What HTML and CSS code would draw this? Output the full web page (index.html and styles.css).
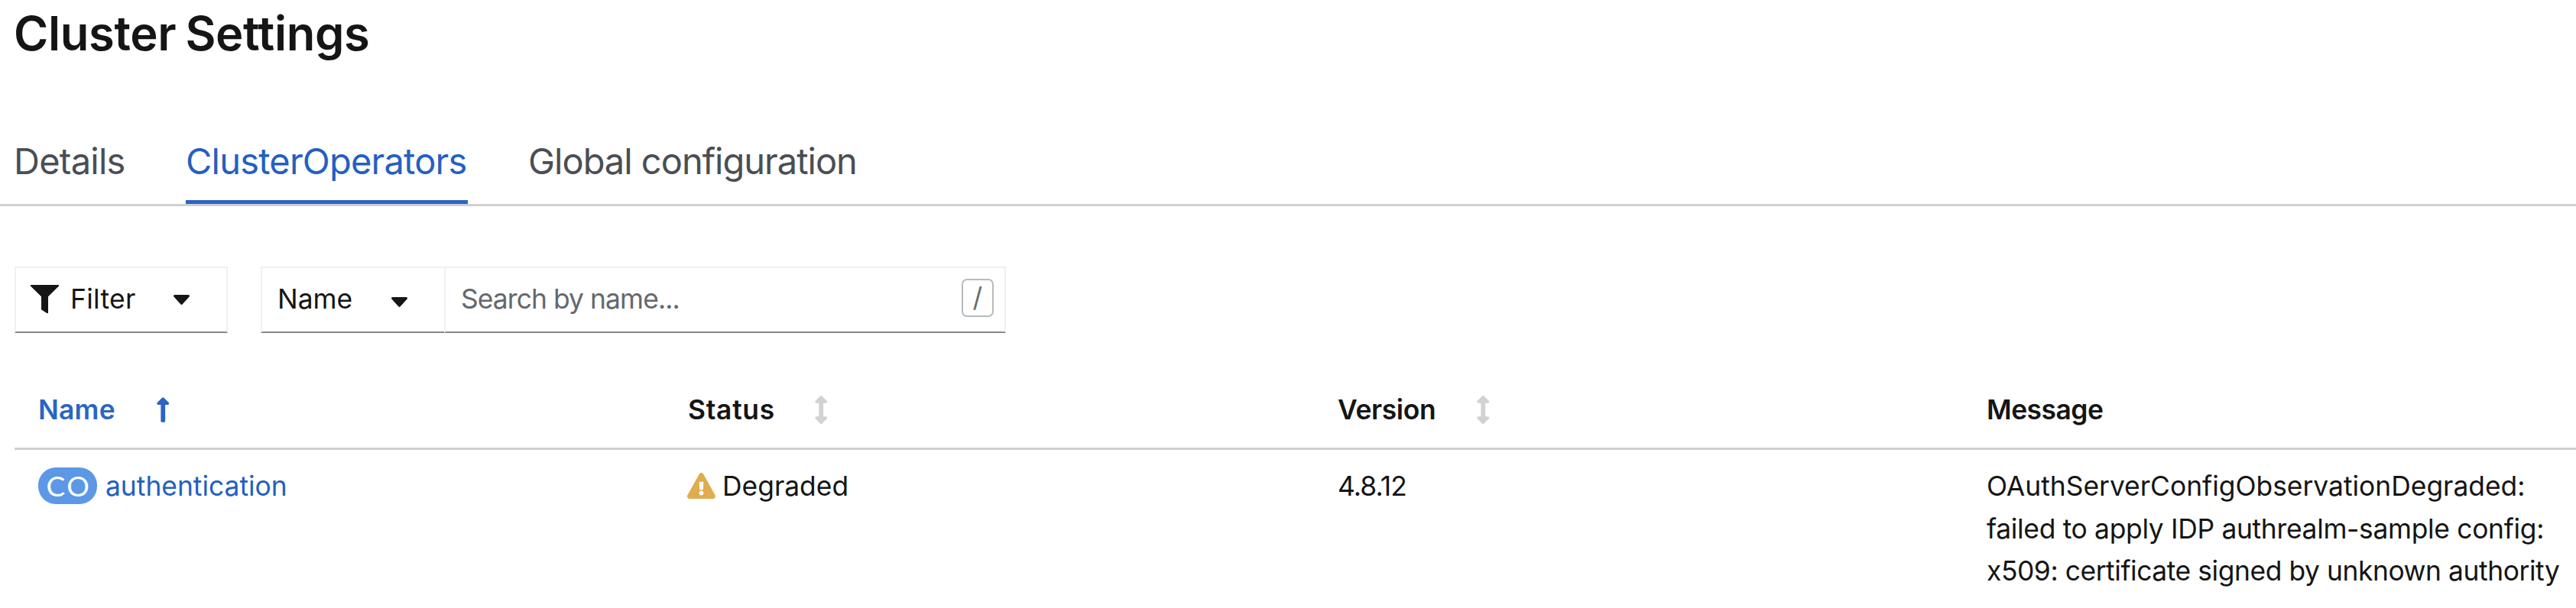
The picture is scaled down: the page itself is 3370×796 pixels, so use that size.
FILE: index.html
```html
<!DOCTYPE html>
<html lang="en">
<head>
<meta charset="utf-8">
<title>Cluster Settings</title>
<link rel="stylesheet" href="styles.css">
</head>
<body>
<h1 class="title">Cluster Settings</h1>
<nav class="tabs">
  <a class="tab tab-details">Details</a>
  <a class="tab tab-operators active">ClusterOperators</a>
  <a class="tab tab-global">Global configuration</a>
</nav>
<div class="toolbar">
  <button class="control filter">
    <svg class="funnel" viewBox="0 0 37 37"><path d="M0 0H37V1.5L23 15.3V37H21.3L14 32.2V15.3L0 1.5Z"/></svg>
    <span class="filter-label">Filter</span>
    <svg class="caret" viewBox="11 192 298 169" preserveAspectRatio="none"><path d="M31.3 192h257.3c17.8 0 26.7 21.500 14.100 34.100L174.100 354.700c-7.800 7.800-20.500 7.800-28.300 0L17.200 226.100C4.600 213.500 13.500 192 31.300 192z"/></svg>
  </button>
  <div class="search-group">
    <button class="control attribute">
      <span>Name</span>
      <svg class="caret caret-low" viewBox="11 192 298 169" preserveAspectRatio="none"><path d="M31.3 192h257.3c17.8 0 26.7 21.500 14.100 34.100L174.100 354.700c-7.800 7.800-20.500 7.800-28.300 0L17.200 226.100C4.600 213.500 13.500 192 31.300 192z"/></svg>
    </button>
    <div class="control search">
      <span class="placeholder">Search by name...</span>
      <kbd class="shortcut"><span>/</span></kbd>
    </div>
  </div>
</div>
<section class="table">
  <div class="row head">
    <div class="cell sorted"><span class="h-name">Name</span>
      <svg class="sort sort-up" viewBox="0 0 256 512"><path d="M88 166.059V468c0 6.627 5.373 12 12 12h56c6.627 0 12-5.373 12-12V166.059h46.059c21.382 0 32.09-25.851 16.971-40.971l-86.059-86.059c-9.373-9.373-24.569-9.373-33.941 0l-86.059 86.059c-15.119 15.119-4.411 40.971 16.971 40.971H88z"/></svg>
    </div>
    <div class="cell"><span class="h-status">Status</span>
      <svg class="sort idle" viewBox="0 0 256 512"><path d="M214.059 377.941H168V134.059h46.059c21.382 0 32.09-25.851 16.971-40.971L144.971 7.029c-9.373-9.373-24.568-9.373-33.941 0L24.971 93.088c-15.119 15.119-4.411 40.971 16.971 40.971H88v243.882H41.941c-21.382 0-32.09 25.851-16.971 40.971l86.059 86.059c9.373 9.373 24.568 9.373 33.941 0l86.059-86.059c15.12-15.119 4.412-40.971-16.97-40.971z"/></svg>
    </div>
    <div class="cell"><span class="h-version">Version</span>
      <svg class="sort sort-version idle" viewBox="0 0 256 512"><path d="M214.059 377.941H168V134.059h46.059c21.382 0 32.09-25.851 16.971-40.971L144.971 7.029c-9.373-9.373-24.568-9.373-33.941 0L24.971 93.088c-15.119 15.119-4.411 40.971 16.971 40.971H88v243.882H41.941c-21.382 0-32.09 25.851-16.971 40.971l86.059 86.059c9.373 9.373 24.568 9.373 33.941 0l86.059-86.059c15.12-15.119 4.412-40.971-16.97-40.971z"/></svg>
    </div>
    <div class="cell"><span class="h-message">Message</span></div>
  </div>
  <div class="row body">
    <div class="cell"><span class="badge">CO</span><a class="link">authentication</a></div>
    <div class="cell">
      <svg class="warning" viewBox="0 0 576 512" preserveAspectRatio="none"><path d="M569.517 440.013C587.975 472.007 564.806 512 527.94 512H48.054c-36.937 0-59.999-40.055-41.577-71.987L246.423 23.985c18.467-32.009 64.72-31.951 83.154 0l239.94 416.028zM288 354c-25.405 0-46 20.595-46 46s20.595 46 46 46 46-20.595 46-46-20.595-46-46-46zm-43.673-165.346l7.418 136c.347 6.364 5.609 11.346 11.982 11.346h48.546c6.373 0 11.635-4.982 11.982-11.346l7.418-136c.375-6.874-5.098-12.654-11.982-12.654h-63.383c-6.884 0-12.356 5.78-11.981 12.654z"/></svg>
      <span>Degraded</span>
    </div>
    <div class="cell version">4.8.12</div>
    <div class="cell message">
      <span>OAuthServerConfigObservationDegraded:</span>
      <span class="line-2">failed to apply IDP authrealm-sample config:</span>
      <span class="line-3">x509: certificate signed by unknown authority</span>
    </div>
  </div>
</section>
</body>
</html>
```
FILE: styles.css
```css
* { box-sizing: border-box; }
body {
  margin: 0;
  background: #fff;
  color: #151515;
  font: 400 35.4px/55.6px Inter, "Liberation Sans", sans-serif;
  white-space: nowrap;
  overflow: hidden;
}
svg { display: block; flex: none; fill: currentColor; }

.title {
  margin: 0 0 87px;
  padding-left: 18px;
  font-size: 61.5px;
  font-weight: 560;
  line-height: 88px;
  letter-spacing: -0.35px;
  word-spacing: -3px;
}

.tabs {
  display: flex;
  gap: 80px;
  padding-left: 18px;
  border-bottom: 3px solid #d0d0d0;
  color: #4a4e54;
  font-size: 47px;
  line-height: 70px;
}
.tab { padding: 1px 0 16px; border-bottom: 5px solid transparent; }
.tab-details { width: 145px; letter-spacing: -0.76px; }
.tab-operators { width: 369px; letter-spacing: -0.79px; }
.tab-global { letter-spacing: -1px; margin-left: -1px; }
.tab.active { color: #2360c1; border-bottom-color: #2b65c2; }

.toolbar { display: flex; gap: 43px; margin: 79px 0 0 19px; }
.control {
  display: flex;
  align-items: center;
  height: 87px;
  padding: 0 0 1px;
  background: #fff;
  border: 2px solid #f0f0f0;
  border-bottom-color: #85888c;
  color: #151515;
  font: inherit;
}
.filter { width: 279px; padding-left: 19px; }
.funnel { width: 37px; height: 37px; margin-bottom: 2px; }
.filter-label { width: 86px; margin: 0 49px 0 15px; text-align: left; letter-spacing: 0.32px; }
.caret { width: 21px; height: 13px; margin-top: 1px; }
.caret-low { margin-top: 6px; }
.search-group { display: flex; }
.attribute { width: 240px; padding-left: 20px; gap: 51px; border-right-width: 0; }
.search { width: 735px; padding: 0 14px 1px 20px; justify-content: space-between; }
.placeholder { color: #64686d; letter-spacing: -0.91px; }
.shortcut {
  display: flex;
  align-items: center;
  justify-content: center;
  width: 42px;
  height: 50px;
  margin-bottom: 4px;
  border: 2px solid #b8bbbe;
  border-radius: 7px;
  color: #6a6e73;
  font: inherit;
}

.table { margin: 73px 0 0 19px; }
.row { display: grid; grid-template-columns: 850px 850px 850px 1fr; padding-left: 31px; }
.head { padding-bottom: 21px; border-bottom: 3px solid #d0d0d0; font-weight: 600; }
.head .cell { height: 56px; }
.body { padding-top: 20px; align-items: start; }
.cell { display: flex; align-items: center; }
.sorted { color: #2b65c2; }
.h-name { letter-spacing: 0.21px; }
.h-status { letter-spacing: 0.71px; }
.h-version { letter-spacing: -0.32px; }
.h-message { letter-spacing: -0.48px; margin-left: -1px; }
.sort { width: 18.5px; height: 37px; margin: 0 0 2px 51px; }
.sort-up, .sort-version { margin-left: 53px; }
.idle { color: #d2d2d2; }
.badge {
  width: 77px;
  height: 48px;
  margin: 0 11px 1px 0;
  padding-left: 3px;
  border-radius: 23px;
  background: #5c98e6;
  color: #fff;
  font: 400 37px/47px Lato, Inter, sans-serif;
  letter-spacing: 2.5px;
  text-align: center;
}
.link { color: #2360c1; }
.warning { width: 37px; height: 34px; margin: 0 9px 1px -1px; color: #dfad50; }
.version { letter-spacing: -0.9px; }
.message { flex-direction: column; align-items: flex-start; margin-left: -1px; }
.line-2 { letter-spacing: -0.31px; }
.line-3 { letter-spacing: -0.43px; }
```
